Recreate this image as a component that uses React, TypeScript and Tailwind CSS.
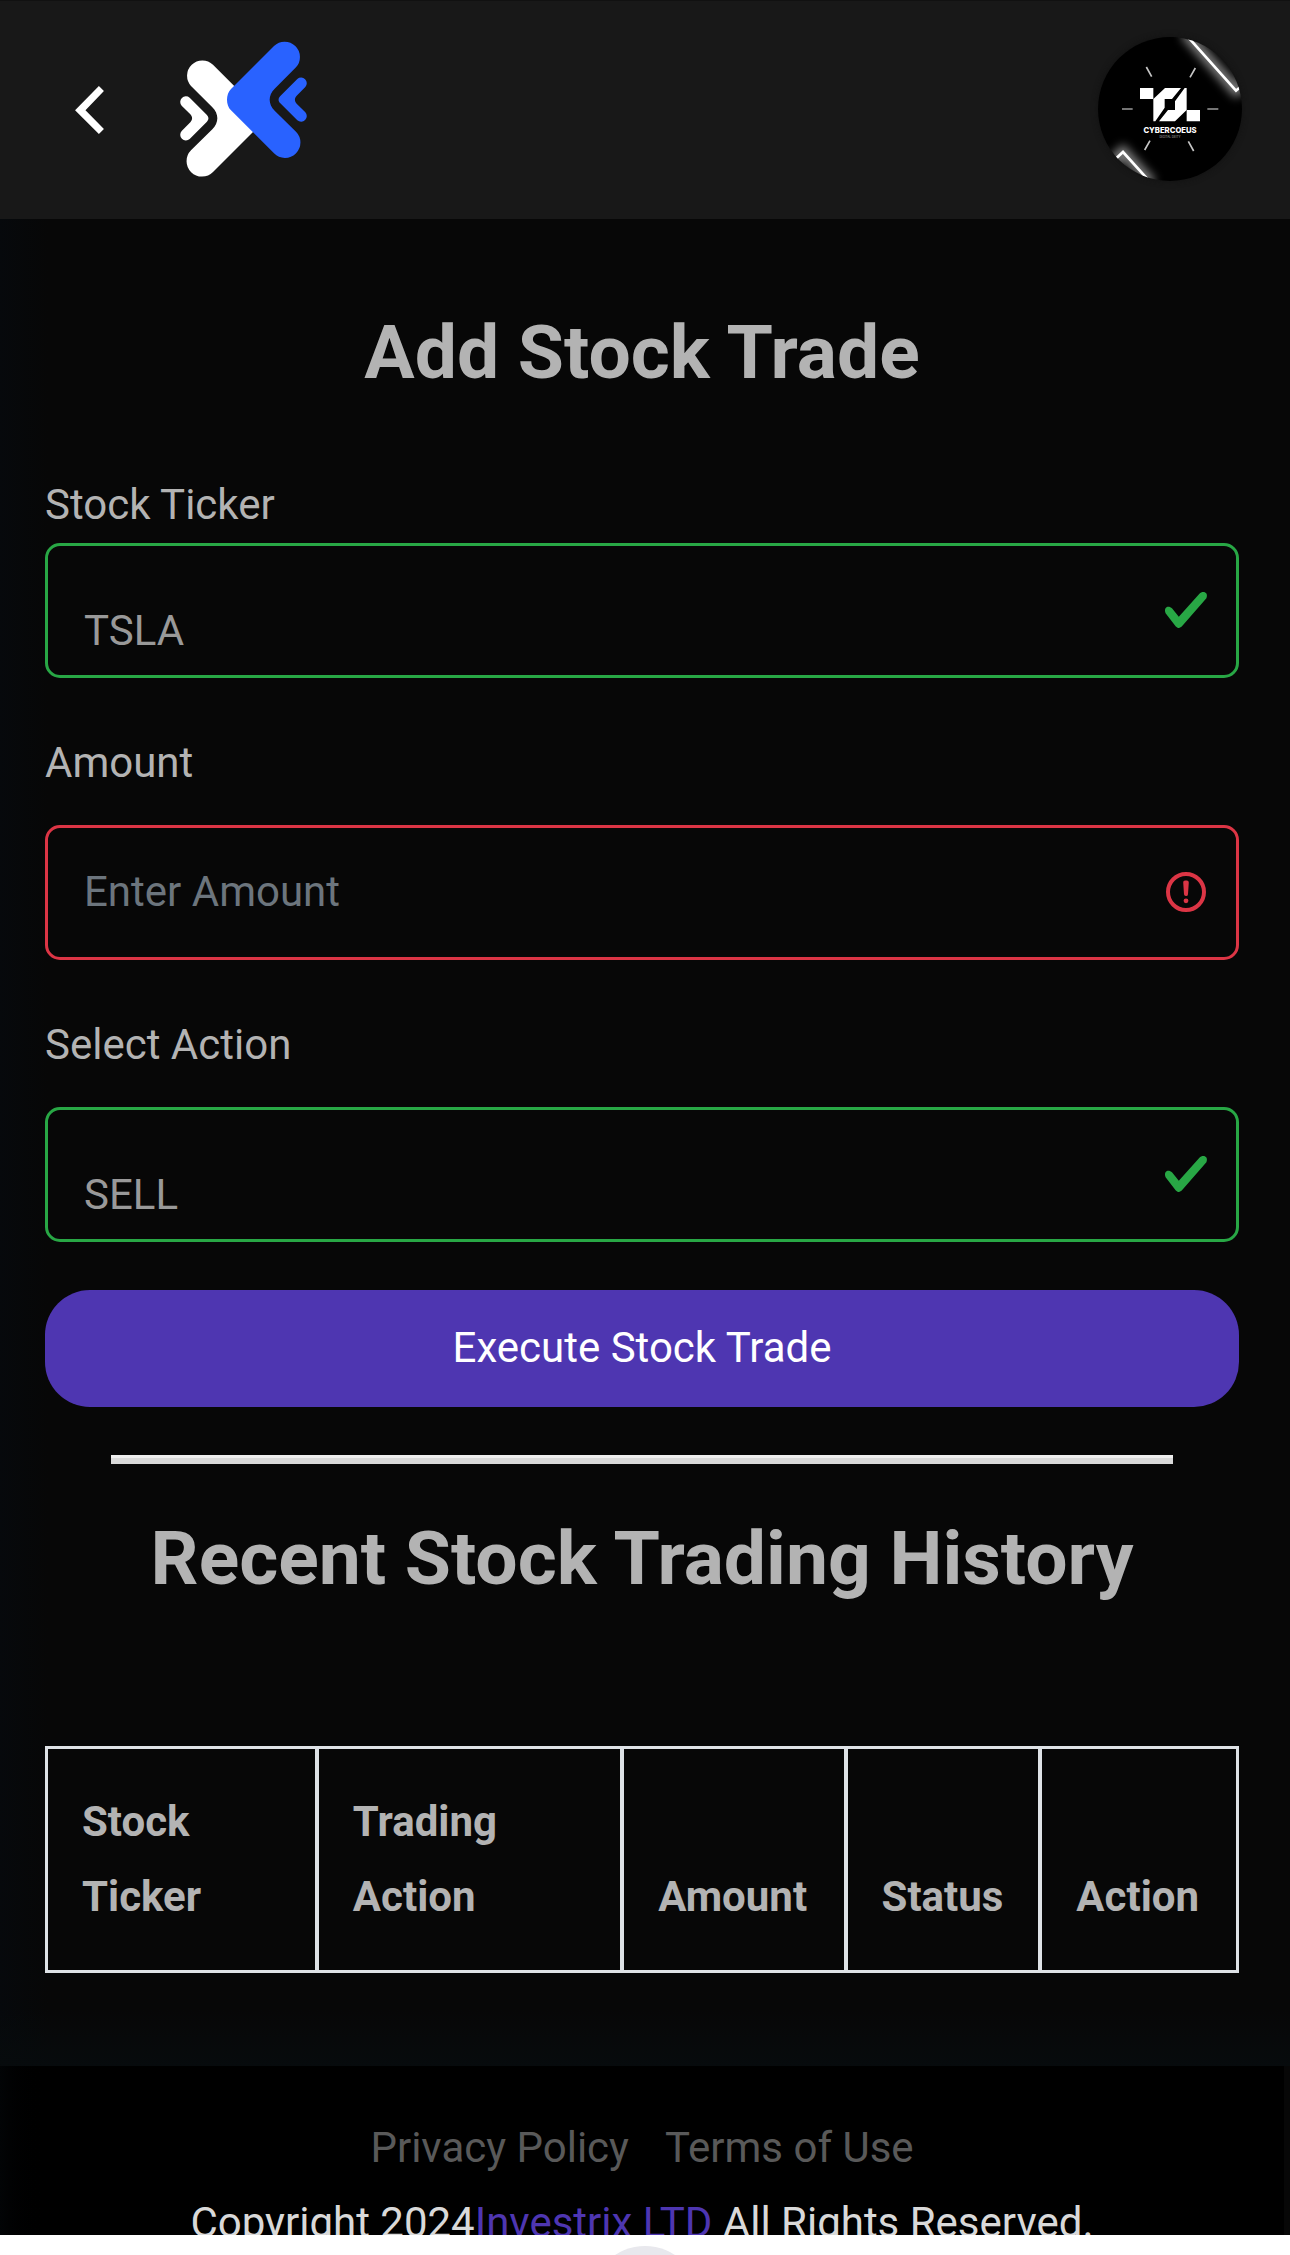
import React from "react";

const CHEVRON =
  "M822 137A46 46 0 0 1 888 201L824 265C804 285 804 311 824 331L888 394A46 46 0 0 1 822 459L693 330C677 314 677 282 693 266Z";
const SMALL_CHEVRON =
  "M892 236A17 17 0 0 1 916 260L890 286C883 293 883 303 890 310L916 336A17 17 0 0 1 892 360L841 309C834 302 834 294 841 287Z";

function BackIcon() {
  return (
    <svg viewBox="226 258 86 143" className="h-12 w-[29px]" fill="#fff" aria-hidden="true">
      <path d="M297 258L312 273L257 330L312 386L297 401L226 330Z" />
    </svg>
  );
}

function Logo() {
  return (
    <svg viewBox="540 122 384 408" className="h-[136px] w-32" role="img" aria-label="Investrix">
      <g fill="#fff" transform="translate(1461 56) scale(-1 1)">
        <path d={CHEVRON} />
        <path d={SMALL_CHEVRON} />
      </g>
      <g fill="#2962ff">
        <path d={CHEVRON} />
        <path d={SMALL_CHEVRON} />
      </g>
    </svg>
  );
}

function Avatar() {
  return (
    <svg viewBox="144 108 432 432" className="size-36" role="img" aria-label="Profile">
      <defs>
        <clipPath id="disc">
          <circle cx="360" cy="324" r="216" />
        </clipPath>
        <filter id="glow" x="-100%" y="-100%" width="300%" height="300%">
          <feGaussianBlur stdDeviation="14" />
        </filter>
      </defs>
      <g clipPath="url(#disc)">
        <rect x="144" y="108" width="432" height="432" fill="#000" />
        <g stroke="#fff" fill="none">
          <g filter="url(#glow)" strokeWidth="34" opacity="0.5">
            <path d="M405 96L558 268L580 250" />
            <path d="M190 480L219 453L305 548" />
          </g>
          <path d="M405 98L558 269L580 250" strokeWidth="8" />
          <path d="M190 480L219 453L305 548" strokeWidth="8" />
        </g>
        <g stroke="#c4c4c4" strokeWidth="5">
          <path d="M289 198L305 227M436 201L420 229M300 419L284 447M415 421L431 450" />
          <path d="M216 324H248M472 324H505" stroke="#9a9a9a" />
        </g>
        <g fill="#fff">
          <path d="M270 261H310V294H270Z" />
          <path d="M410 327H450V361H410Z" />
          <path d="M345 261H393L366 294H344V320L316 361H310V294Z" />
          <path d="M410 261V327L375 361H327L354 327H375V301L404 261Z" />
        </g>
        <g fill="#fff" textAnchor="middle" fontFamily="Inter, sans-serif">
          <text x="360" y="396" fontSize="23" fontWeight="800">
            CYBERCOEUS
          </text>
          <text x="360" y="412" fontSize="9" fill="#aaa">
            DIGITAL DEITY
          </text>
        </g>
      </g>
    </svg>
  );
}

function ValidIcon() {
  return (
    <svg
      viewBox="0 0 8 8"
      className="pointer-events-none absolute top-[43px] right-[29px] size-12"
      aria-hidden="true"
    >
      <path
        fill="#28a745"
        d="M2.3 6.73L.6 4.53c-.4-1.04.46-1.4 1.1-.8l1.1 1.4 3.4-3.8c.6-.63 1.6-.27 1.2.7l-4 4.6c-.43.5-.8.4-1.1.1z"
      />
    </svg>
  );
}

function InvalidIcon() {
  return (
    <svg
      viewBox="0 0 12 12"
      className="pointer-events-none absolute top-[43px] right-[29px] size-12"
      fill="none"
      stroke="#dc3545"
      aria-hidden="true"
    >
      <circle cx="6" cy="6" r="4.5" />
      <path strokeLinejoin="round" d="M5.8 3.6h.4L6 6.5z" />
      <circle cx="6" cy="8.2" r=".6" fill="#dc3545" stroke="none" />
    </svg>
  );
}

function SelectBox({ id, value, options }: { id: string; value: string; options: string[] }) {
  return (
    <div className="relative">
      <select
        id={id}
        defaultValue={value}
        className="block h-[135px] w-full appearance-none rounded-[15px] border-3 border-[#28a745] bg-transparent px-9 pt-[39px] text-[#999]"
      >
        {options.map((o) => (
          <option key={o}>{o}</option>
        ))}
      </select>
      <ValidIcon />
    </div>
  );
}

const COLUMNS = [
  { name: "Stock Ticker", width: "w-[22.8%]" },
  { name: "Trading Action", width: "w-[25.7%]" },
  { name: "Amount", width: "w-[18.8%]" },
  { name: "Status", width: "w-[16.4%]" },
  { name: "Action", width: "w-[16.3%]" },
];

export default function App() {
  return (
    <div className="flex h-screen flex-col bg-[#070707] font-['Roboto',sans-serif] text-[42px] leading-[75px] text-[#b3b3b3]">
      <header className="flex h-[219px] shrink-0 items-center border-t border-[#111] bg-[#181818] pr-12 pl-[75px]">
        <button type="button" aria-label="Back">
          <BackIcon />
        </button>
        <a href="#home" className="mb-[3px] ml-[76px]">
          <Logo />
        </a>
        <a href="#profile" className="mb-[3px] ml-auto rounded-full shadow-[0_0_6px_#111]">
          <Avatar />
        </a>
      </header>

      <div className="flex-1 overflow-y-auto bg-linear-to-r from-[#06090c] to-[#070707] to-[48px] [scrollbar-width:none]">
        <main className="bg-linear-to-t from-[#070b0d] to-transparent to-[56px] pt-[88px] pr-[51px] pb-[93px] pl-[45px]">
          <h1 className="mb-[70px] text-center text-[75px] leading-[90px] font-bold">Add Stock Trade</h1>

          <form onSubmit={(e) => e.preventDefault()}>
            <label htmlFor="ticker" className="mb-px block">
              Stock Ticker
            </label>
            <SelectBox id="ticker" value="TSLA" options={["TSLA", "AAPL", "AMZN"]} />

            <label htmlFor="amount" className="mt-[47px] mb-[25px] block">
              Amount
            </label>
            <div className="relative">
              <input
                id="amount"
                type="text"
                placeholder="Enter Amount"
                className="block h-[135px] w-full rounded-[15px] border-3 border-[#dc3545] bg-transparent px-9 pb-0.5 placeholder:text-[#6c757d]"
              />
              <InvalidIcon />
            </div>

            <label htmlFor="action" className="mt-[47px] mb-[25px] block">
              Select Action
            </label>
            <SelectBox id="action" value="SELL" options={["BUY", "SELL"]} />

            <button
              type="submit"
              className="mt-12 block h-[117px] w-full rounded-[45px] bg-[#4e36b1] pb-0.5 text-white"
            >
              Execute Stock Trade
            </button>
          </form>

          <hr className="mx-[66px] mt-12 h-[9px] border-t-3 border-[#eee] bg-[#d9d9d9]" />

          <h2 className="mt-[49px] mb-[143px] text-center text-[75px] leading-[90px] font-bold">
            Recent Stock Trading History
          </h2>

          <table className="w-full table-fixed border-separate border-spacing-0 border-3 border-[#dee2e6]">
            <thead>
              <tr>
                {COLUMNS.map((c) => (
                  <th
                    key={c.name}
                    scope="col"
                    className={`${c.width} border-r-4 border-[#dee2e6] pt-[35px] pr-0 pb-9 pl-[34px] text-left align-bottom font-bold last:border-r-0`}
                  >
                    <span className="block pr-8">{c.name}</span>
                  </th>
                ))}
              </tr>
            </thead>
          </table>
        </main>

        <footer className="mr-[6px] bg-black bg-linear-to-r from-[#020406] to-black to-[48px] pt-11 pb-12 text-center">
          <nav className="flex justify-center gap-9 text-[#595959]">
            <a href="#privacy">Privacy Policy</a>
            <a href="#terms">Terms of Use</a>
          </nav>
          <p className="text-[#d9d9d9]">
            Copyright 2024
            <a href="#investrix" className="text-[#4e36b1]">
              Investrix LTD
            </a>{" "}
            All Rights Reserved.
          </p>
        </footer>
      </div>

      <div className="flex h-5 shrink-0 justify-center overflow-hidden bg-white pt-[11px]">
        <div className="size-[108px] shrink-0 rounded-full bg-[#e8e8ed]" />
      </div>
    </div>
  );
}
